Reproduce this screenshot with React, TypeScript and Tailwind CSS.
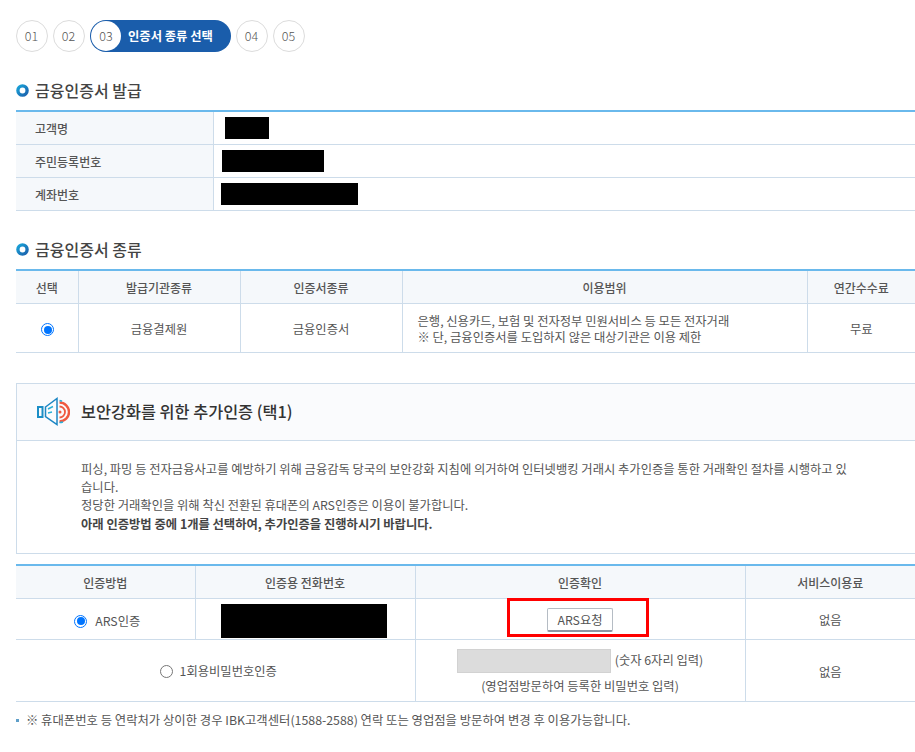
import React from 'react';

const font = "[font-family:'Noto_Sans_CJK_KR','Noto_Sans',sans-serif]";

const Step = ({ n }: { n: string }) => (
  <div className="w-8 h-8 rounded-full border border-[#dcdcdc] bg-white flex items-center justify-center text-[12.5px] font-light text-[#555] pr-px">{n}</div>
);

const Bullet = () => (
  <svg width="13" height="13" viewBox="0 0 13 13" className="shrink-0">
    <defs>
      <linearGradient id="ring" x1="0" y1="0" x2="1" y2="1">
        <stop offset="0" stopColor="#19a3d8" />
        <stop offset="1" stopColor="#1c62ad" />
      </linearGradient>
    </defs>
    <circle cx="6.5" cy="6.5" r="4.6" fill="none" stroke="url(#ring)" strokeWidth="3.4" />
  </svg>
);

const Title = ({ children }: { children: React.ReactNode }) => (
  <div className="flex items-center gap-[6px] h-6">
    <Bullet />
    <h2 className="text-[16px] font-medium text-[#444] leading-6">{children}</h2>
  </div>
);

const Radio = ({ on }: { on?: boolean }) =>
  on ? (
    <span className="inline-block w-[13px] h-[13px] rounded-full border border-[#0075ff] bg-white p-[1.5px] align-middle">
      <span className="block w-full h-full rounded-full bg-[#0075ff]" />
    </span>
  ) : (
    <span className="inline-block w-[13px] h-[13px] rounded-full border border-[#767676] bg-white align-middle" />
  );

const Th = ({ children, w }: { children: React.ReactNode; w?: string }) => (
  <th className={`${w ?? ''} border-r border-b border-[#cddcea] last:border-r-0 bg-[#f5f8fb] font-medium text-[12px] text-[#555] text-center p-0 pt-[2px]`}>{children}</th>
);

const Td = ({ children, className, ...rest }: React.TdHTMLAttributes<HTMLTableCellElement>) => (
  <td {...rest} className={`border-r border-b border-[#cddcea] last:border-r-0 text-[12.3px] text-[#555] text-center p-0 ${className ?? ''}`}>{children}</td>
);

const InfoRow = ({ label, w, ml }: { label: string; w: string; ml: string }) => (
  <div className="flex h-[33px] border-b border-[#cddcea]">
    <div className="w-[198px] shrink-0 bg-[#f5f8fb] border-r border-[#cddcea] pl-[19px] pt-[2px] flex items-center text-[12px] font-medium text-[#555]">{label}</div>
    <div className="flex items-center">
      <div className={`h-[22px] bg-black ${w} ${ml}`} />
    </div>
  </div>
);

export default function App() {
  return (
    <div className={`${font} w-[915px] h-[752px] overflow-hidden bg-white pl-4 pt-5`}>
      <div className="w-[899px]">
        <div className="flex items-center gap-[5px] h-8">
          <Step n="01" />
          <Step n="02" />
          <div className="flex items-center h-8 w-[141px] rounded-full bg-[#1a5dab]">
            <div className="w-[30px] h-[30px] ml-px rounded-full bg-white flex items-center justify-center text-[12.5px] font-light text-[#555]">03</div>
            <span className="ml-[7px] text-[12.3px] font-bold text-white whitespace-nowrap">인증서 종류 선택</span>
          </div>
          <Step n="04" />
          <Step n="05" />
        </div>

        <div className="mt-[26px]">
          <Title>금융인증서 발급</Title>
        </div>
        <div className="mt-[8px] border-t-2 border-[#6ab9ec]">
          <InfoRow label="고객명" w="w-[44px]" ml="ml-[11px]" />
          <InfoRow label="주민등록번호" w="w-[102px]" ml="ml-[8px]" />
          <InfoRow label="계좌번호" w="w-[137px]" ml="ml-[7px]" />
        </div>

        <div className="mt-[26px]">
          <Title>금융인증서 종류</Title>
        </div>
        <table className="mt-[8px] w-full table-fixed border-collapse border-t-2 border-[#6ab9ec]">
          <thead>
            <tr className="h-[33px]">
              <Th w="w-[62px]">선택</Th>
              <Th w="w-[162px]">발급기관종류</Th>
              <Th w="w-[162px]">인증서종류</Th>
              <Th w="w-[405px]">이용범위</Th>
              <Th>연간수수료</Th>
            </tr>
          </thead>
          <tbody>
            <tr className="h-[49px]">
              <Td className="pl-[2px] pt-[2px]"><Radio on /></Td>
              <Td className="pt-[3px]">금융결제원</Td>
              <Td className="pt-[3px]">금융인증서</Td>
              <Td className="text-left pl-[15px] pt-[2px] leading-4">
                은행, 신용카드, 보험 및 전자정부 민원서비스 등 모든 전자거래
                <br />※ 단, 금융인증서를 도입하지 않은 대상기관은 이용 제한
              </Td>
              <Td className="pt-[3px]">무료</Td>
            </tr>
          </tbody>
        </table>

        <div className="mt-[30px] h-[171px] w-[905px] border border-[#cddcea]">
          <div className="h-[57px] bg-[#fafbfd] border-b border-[#cddcea] flex items-center pl-[20px]">
            <svg width="33" height="29" viewBox="0 0 33 29" className="shrink-0">
              <rect x="1" y="10" width="4.5" height="10" fill="none" stroke="#1b8ec6" strokeWidth="2" />
              <path d="M8.5 10 L20 1.5 V27.5 L8.5 19.5 Z" fill="none" stroke="#1c86c4" strokeWidth="1.5" />
              <path d="M11 12 L16 9.5 M11 16 L15 15" fill="none" stroke="#29b0d8" strokeWidth="1.4" />
              <path d="M22.5 5.5 A9.5 9.5 0 0 1 22.5 24.5" fill="none" stroke="#ef5a41" strokeWidth="2.4" />
              <path d="M22.5 9.5 A5.5 5.5 0 0 1 22.5 20.5" fill="none" stroke="#ef5a41" strokeWidth="1.8" />
              <path d="M22.5 3.5 A11 11 0 0 1 25 4.2 M22.5 25.5 A11 11 0 0 0 26 25" fill="none" stroke="#29b0d8" strokeWidth="1.6" />
              <circle cx="23" cy="15" r="1.5" fill="#ef5a41" />
            </svg>
            <h3 className="ml-[11px] text-[16.3px] font-medium text-[#333]">보안강화를 위한 추가인증 (택1)</h3>
          </div>
          <div className="pl-[64px] pt-[19px] w-[840px] text-[12.3px] leading-[18.4px] text-[#555]">
            피싱, 파밍 등 전자금융사고를 예방하기 위해 금융감독 당국의 보안강화 지침에 의거하여 인터넷뱅킹 거래시 추가인증을 통한 거래확인 절차를 시행하고 있습니다.
            <br />정당한 거래확인을 위해 착신 전환된 휴대폰의 ARS인증은 이용이 불가합니다.
            <br /><b className="font-bold text-[#444]">아래 인증방법 중에 1개를 선택하여, 추가인증을 진행하시기 바랍니다.</b>
          </div>
        </div>

        <table className="mt-[10px] w-full table-fixed border-collapse border-t-2 border-[#6ab9ec]">
          <thead>
            <tr className="h-[34px]">
              <Th w="w-[179px]">인증방법</Th>
              <Th w="w-[220px]">인증용 전화번호</Th>
              <Th w="w-[330px]">인증확인</Th>
              <Th>서비스이용료</Th>
            </tr>
          </thead>
          <tbody>
            <tr className="h-[41px]">
              <Td className="pt-[6px] pl-[4px]">
                <span className="inline-flex items-center gap-[8px]"><Radio on />ARS인증</span>
              </Td>
              <Td>
                <div className="w-[166px] h-[34px] bg-black ml-[25px] mt-[4px]" />
              </Td>
              <Td>
                <div className="relative inline-block align-middle mt-[2px]">
                  <button className="w-[66px] h-6 bg-white border border-[#b5bcc4] border-b-2 border-b-[#8d97a3] rounded-[2px] text-[12.3px] text-[#555] pt-[1px]">ARS요청</button>
                  <div className="absolute left-[-40px] top-[-10px] w-[142px] h-[39px] border-[3px] border-[#f00]" />
                </div>
              </Td>
              <Td className="pt-[3px]">없음</Td>
            </tr>
            <tr className="h-[62px]">
              <Td colSpan={2} className="pl-[6px] pt-[4px]">
                <span className="inline-flex items-center gap-[7px]"><Radio />1회용비밀번호인증</span>
              </Td>
              <Td className="pt-[2px]">
                <div className="flex items-center justify-center gap-[4px] h-6">
                  <div className="w-[154px] h-6 bg-[#dcdcdc] border border-[#d2d2d2]" />
                  <span>(숫자 6자리 입력)</span>
                </div>
                <div className="mt-[4px] leading-[18px]">(영업점방문하여 등록한 비밀번호 입력)</div>
              </Td>
              <Td className="pt-[4px]">없음</Td>
            </tr>
          </tbody>
        </table>

        <div className="mt-[9px] flex items-center gap-[7px] text-[12.35px] text-[#555] leading-[18px]">
          <span className="w-[3px] h-[3px] bg-[#5f9fc9] shrink-0" />
          <p className="whitespace-nowrap">※ 휴대폰번호 등 연락처가 상이한 경우 IBK고객센터(1588-2588) 연락 또는 영업점을 방문하여 변경 후 이용가능합니다.</p>
        </div>
      </div>
    </div>
  );
}
